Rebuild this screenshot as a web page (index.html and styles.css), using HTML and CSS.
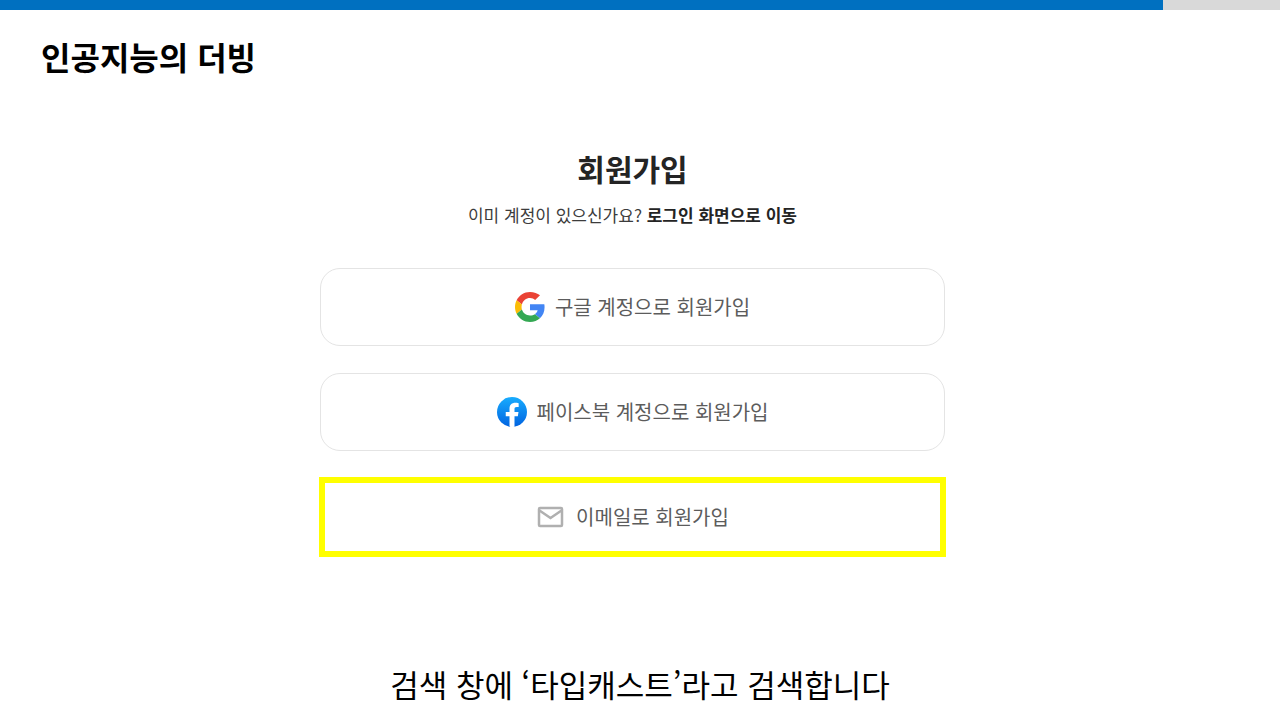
FILE: index.html
```
<!DOCTYPE html>
<html lang="ko">
  <head>
    <title>인공지능의 더빙</title>
    <meta charset="UTF-8" />
    <meta name="viewport" content="width=device-width, initial-scale=1.0" />
    <link rel="stylesheet" href="styles.css">
  </head>

  <body>
    <div class="progress"><div class="progress-bar"></div></div>

    <header class="slide-header">
      <h1>인공지능의 더빙</h1>
    </header>

    <main class="signup">
      <h2>회원가입</h2>
      <p class="login-hint">
        이미 계정이 있으신가요? <a href="#login">로그인 화면으로 이동</a>
      </p>

      <div class="signup-buttons">
        <button type="button">
          <svg class="icon" viewBox="0 0 48 48" aria-hidden="true">
            <path fill="#EA4335" d="M24 9.500c3.540 0 6.200 1.400 8.200 3.200l7.800-7.400C35.900 2 30.470 0 24 0 14.620 0 6.510 5.380 2.560 13.220l8.500 6.600C12.900 13.720 17.740 9.500 24 9.500z" />
            <path fill="#4285F4" d="M47.300 24.550c0-1.800-.1-3.400-.4-5H24v9.800h12.200c-.7 2.600-2.200 4.700-4.300 6.100l8 6.700c4.700-4.180 7.400-10 7.400-17.600z" />
            <path fill="#FBBC05" d="M11.060 28.180c-.4-1.300-.6-2.700-.6-4.180s.2-2.880.6-4.180l-8.500-6.600C.92 16.460 0 20.120 0 24c0 3.880.92 7.540 2.560 10.780l8.500-6.600z" />
            <path fill="#34A853" d="M24 48c6.480 0 11.930-2.130 15.890-5.810l-8-6.700c-2.150 1.450-4.650 2.100-7.890 2.100-6.260 0-11.100-3.700-12.940-9.410l-8.500 6.600C6.510 42.620 14.620 48 24 48z" />
          </svg>
          구글 계정으로 회원가입
        </button>

        <button type="button">
          <svg class="icon" viewBox="0 0 36 36" aria-hidden="true">
            <defs>
              <linearGradient id="fb" x1="0" y1="0" x2="0" y2="1">
                <stop offset="0" stop-color="#18ACFE" />
                <stop offset="1" stop-color="#0163E0" />
              </linearGradient>
            </defs>
            <circle cx="18" cy="18" r="18" fill="url(#fb)" />
            <path fill="#fff" d="M25 23l.8-5H21v-3.500c0-1.400.5-2.500 2.700-2.500H26V7.400c-1.300-.2-2.700-.4-4-.4-4.100 0-7 2.500-7 7v4h-4.500v5H15v12.700c1 .2 2 .3 3 .3s2-.1 3-.3V23h4z" />
          </svg>
          페이스북 계정으로 회원가입
        </button>

        <button type="button" class="highlighted">
          <svg class="icon icon-mail" viewBox="0 0 30 30" aria-hidden="true">
            <rect x="3" y="6" width="23" height="18" rx="1" />
            <path d="M3.500 8.500l11 7.500 11-7.500" />
          </svg>
          이메일로 회원가입
        </button>
      </div>
    </main>

    <footer class="caption">검색 창에 ‘타입캐스트’라고 검색합니다</footer>
  </body>
</html>
```
FILE: styles.css
```
:root {
  --color-bg: #ffffff;
  --color-progress: #0070c0;
  --color-track: #d9d9d9;
  --color-text: #242424;
  --color-hint: #3c3c3c;
  --color-button-text: #5c5c5c;
  --color-border: #e4e4e4;
  --color-highlight: #ffff00;
}

* {
  box-sizing: border-box;
}

body {
  font-family: "Noto Sans CJK KR", "Noto Sans", sans-serif;
  display: flex;
  flex-direction: column;
  min-height: 100vh;
  margin: 0;
  background-color: var(--color-bg);
  color: var(--color-text);
}

h1,
h2,
p {
  margin: 0;
}

.progress {
  height: 10px;
  background-color: var(--color-track);
}

.progress-bar {
  width: 90.86%;
  height: 100%;
  background-color: var(--color-progress);
}

.slide-header {
  padding: 22px 41px 24px;
  color: #000;
}

.slide-header h1 {
  font-size: 32px;
  line-height: 48px;
  font-weight: 700;
}

.signup {
  width: 100%;
  padding: 40px 15px 0 0;
  text-align: center;
}

.signup h2 {
  font-size: 30px;
  line-height: 48px;
  font-weight: 700;
}

.login-hint {
  margin-top: 11px;
  color: var(--color-hint);
  font-size: 17px;
  line-height: 24px;
}

.login-hint a {
  color: var(--color-text);
  font-weight: 700;
  text-decoration: none;
}

.signup-buttons {
  display: flex;
  flex-direction: column;
  gap: 27px;
  max-width: 625px;
  margin: 41px auto 0;
}

.signup-buttons button {
  display: flex;
  justify-content: center;
  align-items: center;
  gap: 10px;
  height: 78px;
  border: 1px solid var(--color-border);
  border-radius: 20px;
  background-color: var(--color-bg);
  color: var(--color-button-text);
  font-family: inherit;
  font-size: 20px;
  line-height: 30px;
  cursor: pointer;
}

/* square yellow marker drawn over the rounded border */
.signup-buttons .highlighted {
  border-color: transparent;
  border-radius: 0;
  outline: 6px solid var(--color-highlight);
  outline-offset: -5px;
}

.icon {
  width: 30px;
  height: 30px;
}

.icon-mail {
  fill: none;
  stroke: #b0b0b0;
  stroke-width: 2.5;
}

.caption {
  margin-top: auto;
  padding: 0 24px 12px;
  color: #000;
  font-size: 31px;
  line-height: 48px;
  text-align: center;
}
```
